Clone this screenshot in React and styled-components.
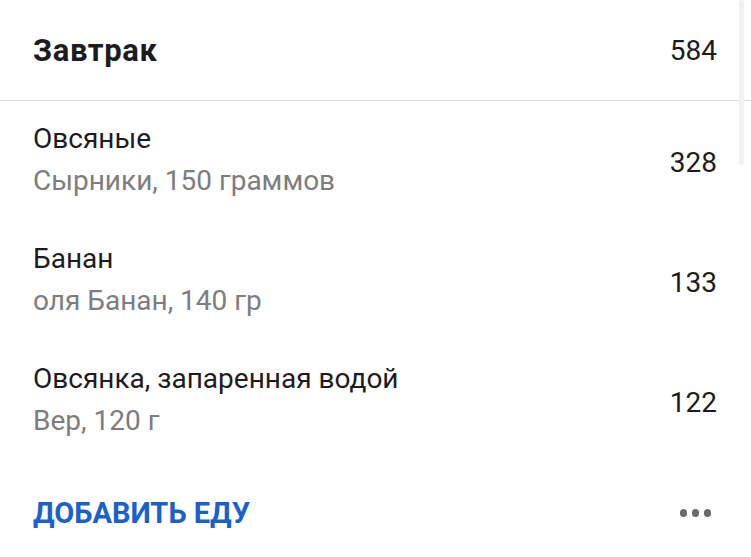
import React from 'react';
import styled, { createGlobalStyle } from 'styled-components';

const meal = {
  title: 'Завтрак',
  total: 584,
  items: [
    { name: 'Овсяные', note: 'Сырники, 150 граммов', kcal: 328 },
    { name: 'Банан', note: 'оля Банан, 140 гр', kcal: 133 },
    { name: 'Овсянка, запаренная водой', note: 'Вер, 120 г', kcal: 122 },
  ],
};

export default function App() {
  return (
    <>
      <GlobalStyle />
      <Card>
        <Header>
          <Title>{meal.title}</Title>
          <Kcal>{meal.total}</Kcal>
        </Header>
        {meal.items.map((item) => (
          <Row key={item.name}>
            <Info>
              <Name>{item.name}</Name>
              <Note>{item.note}</Note>
            </Info>
            <Kcal $shift>{item.kcal}</Kcal>
          </Row>
        ))}
        <Footer>
          <AddButton type="button">Добавить еду</AddButton>
          <More aria-label="Ещё">
            <Dot />
            <Dot />
            <Dot />
          </More>
        </Footer>
        <Scrollbar />
      </Card>
    </>
  );
}

const GlobalStyle = createGlobalStyle`
  body {
    margin: 0;
    background: #fff;
    font-family: Roboto, "Liberation Sans", sans-serif;
    color: #1c1c1e;
  }
`;

const Card = styled.div`
  position: relative;
  width: 751px;
  height: 557px;
  overflow: hidden;
  background: #fff;
`;

const Header = styled.div`
  display: flex;
  align-items: center;
  justify-content: space-between;
  height: 100px;
  padding: 0 34px 0 33px;
  border-bottom: 1px solid #dcdcdc;
`;

const Title = styled.h2`
  margin: 0;
  font-size: 31px;
  font-weight: 700;
  letter-spacing: 0.6px;
`;

const Kcal = styled.span`
  font-size: 28px;
  font-weight: 400;
  color: #1c1c1e;
  padding-top: ${(p) => (p.$shift ? '5px' : '0')};
`;

const Row = styled.div`
  display: flex;
  align-items: center;
  justify-content: space-between;
  height: 120px;
  box-sizing: border-box;
  padding: 17px 34px 19px 33px;
`;

const Info = styled.div`
  display: flex;
  flex-direction: column;
`;

const Name = styled.span`
  font-size: 28px;
  line-height: 42px;
  color: #1c1c1e;
`;

const Note = styled.span`
  font-size: 28px;
  line-height: 42px;
  color: #7d7d7f;
`;

const Footer = styled.div`
  display: flex;
  align-items: center;
  justify-content: space-between;
  padding: 31px 40px 0 33px;
`;

const AddButton = styled.button`
  border: 0;
  padding: 0;
  background: none;
  font-family: inherit;
  font-size: 29px;
  line-height: 42px;
  font-weight: 700;
  text-transform: uppercase;
  color: #1a61c9;
`;

const More = styled.div`
  display: flex;
  gap: 4.5px;
`;

const Dot = styled.span`
  width: 7.5px;
  height: 7.5px;
  border-radius: 50%;
  background: #6a6a6a;
`;

const Scrollbar = styled.div`
  position: absolute;
  top: 0;
  right: 7px;
  width: 5px;
  height: 165px;
  border-radius: 3px;
  background: #f1f1f1;
`;
